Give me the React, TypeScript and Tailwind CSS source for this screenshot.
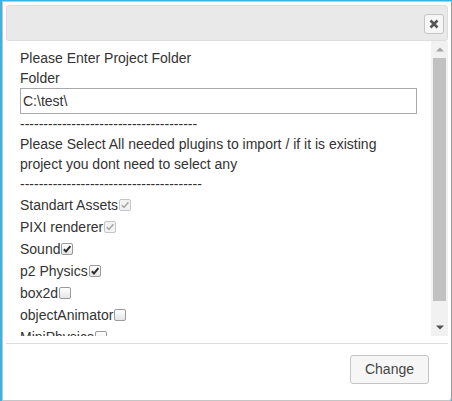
import React from "react";

type CbState = "disabledChecked" | "checked" | "unchecked";

function Cb({ state }: { state: CbState }) {
  const disabled = state === "disabledChecked";
  const checked = state !== "unchecked";
  return (
    <span
      className={
        "inline-block w-[12px] h-[12px] ml-[1px] rounded-[2px] border align-[-1px] relative " +
        (disabled
          ? "border-[#c6c6c6] bg-[#f2f2f2]"
          : "border-[#9a9a9a] bg-gradient-to-b from-[#ffffff] to-[#e6e6e6]")
      }
    >
      {checked && (
        <svg
          width="10"
          height="10"
          viewBox="0 0 10 10"
          className="absolute left-[0px] top-[0px]"
        >
          <path
            d="M1.8 5.2 L4 7.4 L8.4 2.2"
            fill="none"
            stroke={disabled ? "#a8a8a8" : "#2e2e2e"}
            strokeWidth={disabled ? 1.6 : 2}
          />
        </svg>
      )}
    </span>
  );
}

const rows: { label: string; state: CbState }[] = [
  { label: "Standart Assets", state: "disabledChecked" },
  { label: "PIXI renderer", state: "disabledChecked" },
  { label: "Sound", state: "checked" },
  { label: "p2 Physics", state: "checked" },
  { label: "box2d", state: "unchecked" },
  { label: "objectAnimator", state: "unchecked" },
  { label: "MiniPhysics", state: "unchecked" },
];

export default function App() {
  return (
    <div
      className="w-[452px] h-[401px] bg-[#38b3e4] pl-[2px] pt-[1px] flex"
      style={{ fontFamily: '"Liberation Sans", Arial, sans-serif' }}
    >
      <div className="w-[450px] h-[400px] border border-[#c5c5c5] border-r-[#9a9a9a] rounded-br-[3px] bg-white p-[3px] flex flex-col">
        {/* title bar */}
        <div className="h-[36px] shrink-0 bg-[#e9e9e9] border border-[#dddddd] rounded-[3px] flex items-center justify-end pr-[3px] pt-[1px]">
          <div className="w-[20px] h-[20px] border border-[#c5c5c5] bg-[#f6f6f6] rounded-[3px] flex items-center justify-center">
            <svg width="10" height="10" viewBox="0 0 10 10">
              <path
                d="M1.5 1.5 L8.5 8.5 M8.5 1.5 L1.5 8.5"
                stroke="#555555"
                strokeWidth="2.6"
                strokeLinecap="butt"
              />
            </svg>
          </div>
        </div>
        {/* content */}
        <div className="h-[295px] shrink-0 flex">
          <div className="flex-1 overflow-hidden pl-[14px] pr-[14px] pt-[7px] text-[14px] leading-[20px] text-[#333333]">
            <div>Please Enter Project Folder</div>
            <div>Folder</div>
            <div className="h-[26px] border border-[#a9a9a9] pl-[2px] flex items-center">
              C:\test\
            </div>
            <div>--------------------------------------</div>
            <div>
              Please Select All needed plugins to import / if it is existing
              project you dont need to select any
            </div>
            <div>---------------------------------------</div>
            {rows.map((r) => (
              <div key={r.label} className="h-[22px] leading-[22px] whitespace-nowrap">
                {r.label}
                <Cb state={r.state} />
              </div>
            ))}
          </div>
          {/* scrollbar */}
          <div className="w-[17px] h-full bg-[#f1f1f1] flex flex-col">
            <div className="h-[17px] flex items-center justify-center">
              <svg width="8" height="5" viewBox="0 0 8 5">
                <path d="M0 4.5 L4 0.5 L8 4.5 Z" fill="#a3a3a3" />
              </svg>
            </div>
            <div className="mx-[2px] h-[243px] bg-[#c1c1c1]" />
            <div className="flex-1" />
            <div className="h-[17px] flex items-center justify-center">
              <svg width="8" height="5" viewBox="0 0 8 5">
                <path d="M0 0.5 L8 0.5 L4 4.5 Z" fill="#505050" />
              </svg>
            </div>
          </div>
        </div>
        {/* button pane */}
        <div className="mt-[7px] flex-1 border-t border-[#dddddd] flex justify-end items-start pt-[11px] pr-[19px]">
          <div className="w-[79px] h-[29px] border border-[#c5c5c5] bg-[#f6f6f6] rounded-[3px] flex items-center justify-center text-[14px] text-[#454545]">
            Change
          </div>
        </div>
      </div>
    </div>
  );
}
